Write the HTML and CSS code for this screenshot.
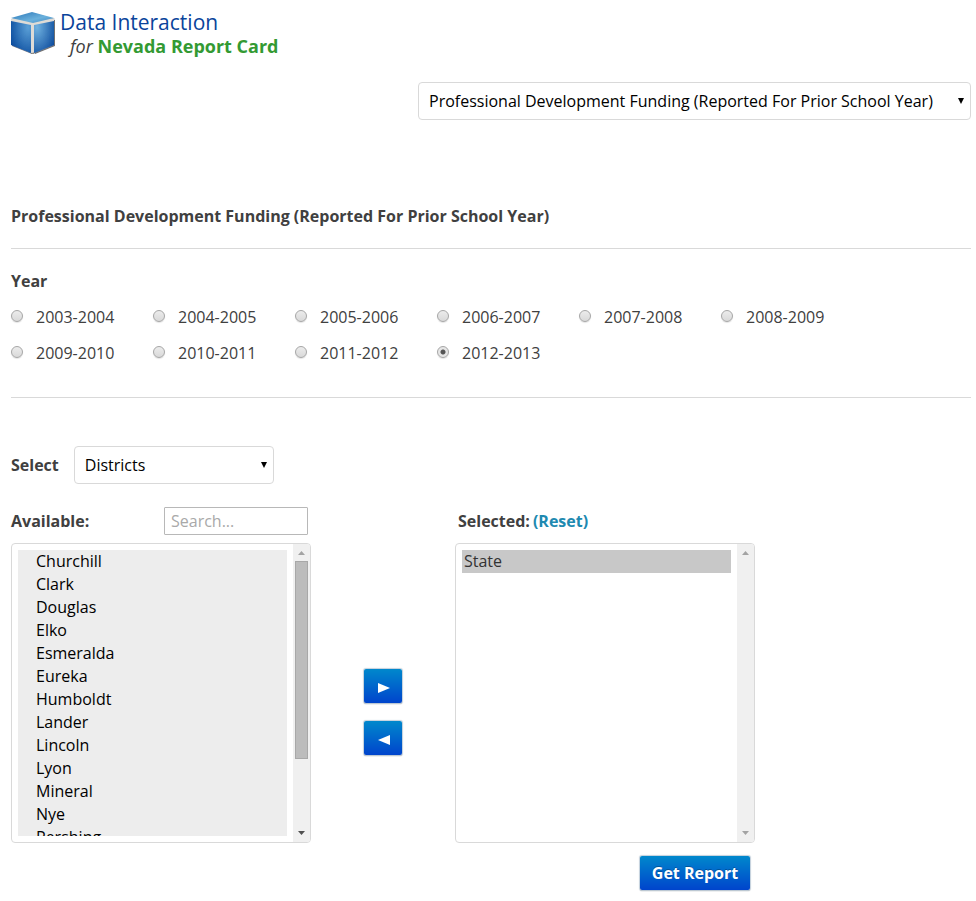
FILE: index.html
```html
<!DOCTYPE html>
<html lang="en">
<head>
<meta charset="utf-8">
<title>Data Interaction for Nevada Report Card</title>
<link rel="stylesheet" href="styles.css">
</head>
<body>
<header class="brand">
  <svg class="logo" viewBox="1 0 48 46" aria-hidden="true">
    <defs>
      <linearGradient id="top" x1="0" y1="0" x2="1" y2="1"><stop offset="0" stop-color="#2a76b8"/><stop offset=".6" stop-color="#6bb1dc"/><stop offset="1" stop-color="#3d86c2"/></linearGradient>
      <radialGradient id="left" cx=".85" cy=".2" r=".95"><stop offset="0" stop-color="#5a9fd6"/><stop offset="1" stop-color="#0e4fa0"/></radialGradient>
      <radialGradient id="right" cx=".15" cy=".2" r="1"><stop offset="0" stop-color="#70b2e0"/><stop offset="1" stop-color="#0e4d9e"/></radialGradient>
      <filter id="shade" x="-10%" y="-10%" width="125%" height="125%"><feDropShadow dx="1" dy="1" stdDeviation=".6" flood-color="#222" flood-opacity=".65"/></filter>
    </defs>
    <g filter="url(#shade)">
      <path d="M1 8 22 2 44 8V33L22 42 1 33Z" fill="#dedbd6"/>
      <path d="M1 7 22 1 44 7 23 12Z" fill="url(#top)"/>
      <path d="M1 10 21 14V42L1 34Z" fill="url(#left)"/>
      <path d="M24 14 44 10V34L24 42Z" fill="url(#right)"/>
    </g>
  </svg>
  <div class="brand-text">
    <div class="brand-name">Data Interaction</div>
    <div class="brand-sub"><em>for</em> <strong>Nevada Report Card</strong></div>
  </div>
</header>

<main>
  <div class="topic">
    <span class="dropdown dropdown-topic">
      <select aria-label="Topic"><option>Professional Development Funding (Reported For Prior School Year)</option></select>
      <svg class="caret" viewBox="0 0 6 6" aria-hidden="true"><path d="M0 0H6L3 6Z"/></svg>
    </span>
  </div>

  <h1>Professional Development Funding (Reported For Prior School Year)</h1>

  <fieldset class="years">
    <legend>Year</legend>
    <div class="year-grid">
      <label><input type="radio" name="year">2003-2004</label>
      <label><input type="radio" name="year">2004-2005</label>
      <label><input type="radio" name="year">2005-2006</label>
      <label><input type="radio" name="year">2006-2007</label>
      <label><input type="radio" name="year">2007-2008</label>
      <label><input type="radio" name="year">2008-2009</label>
      <label><input type="radio" name="year">2009-2010</label>
      <label><input type="radio" name="year">2010-2011</label>
      <label><input type="radio" name="year">2011-2012</label>
      <label><input type="radio" name="year" checked>2012-2013</label>
    </div>
  </fieldset>

  <div class="scope">
    <label for="scope">Select</label>
    <span class="dropdown dropdown-scope">
      <select id="scope"><option>Districts</option></select>
      <svg class="caret" viewBox="0 0 6 6" aria-hidden="true"><path d="M0 0H6L3 6Z"/></svg>
    </span>
  </div>

  <div class="picker">
    <section class="column">
      <div class="column-head">
        <label for="available">Available:</label>
        <input class="search" type="text" placeholder="Search..." aria-label="Search">
      </div>
      <div class="listbox listbox-available">
        <select id="available" multiple size="12">
          <option>Churchill</option><option>Clark</option><option>Douglas</option><option>Elko</option>
          <option>Esmeralda</option><option>Eureka</option><option>Humboldt</option><option>Lander</option>
          <option>Lincoln</option><option>Lyon</option><option>Mineral</option><option>Nye</option>
          <option>Pershing</option><option>Storey</option><option>Washoe</option><option>White Pine</option>
        </select>
        <div class="track">
          <svg viewBox="0 0 7 4" aria-hidden="true"><path d="M0 4 3.5 0 7 4Z"/></svg>
          <div class="thumb"></div>
          <svg class="active" viewBox="0 0 7 4" aria-hidden="true"><path d="M0 0H7L3.5 4Z"/></svg>
        </div>
      </div>
    </section>

    <div class="moves">
      <button class="button move" type="button" aria-label="Add"><svg viewBox="0 0 12 10" aria-hidden="true"><path d="M0 0 12 5 0 10Z"/></svg></button>
      <button class="button move" type="button" aria-label="Remove"><svg viewBox="0 0 12 10" aria-hidden="true"><path d="M12 0 0 5 12 10Z"/></svg></button>
    </div>

    <section class="column">
      <div class="column-head column-head-selected">
        <label for="selected">Selected:</label>
        <a href="#">(Reset)</a>
      </div>
      <div class="listbox listbox-selected">
        <select id="selected" multiple size="12"><option selected>State</option></select>
        <div class="track">
          <svg viewBox="0 0 7 4" aria-hidden="true"><path d="M0 4 3.5 0 7 4Z"/></svg>
          <svg viewBox="0 0 7 4" aria-hidden="true"><path d="M0 0H7L3.5 4Z"/></svg>
        </div>
      </div>
      <div class="actions"><button class="button report" type="button">Get Report</button></div>
    </section>
  </div>
</main>
</body>
</html>
```

FILE: styles.css
```css
* { box-sizing: border-box; }

body {
  margin: 0;
  padding: 11px 5px 10px 11px;
  background: #fff;
  color: #404040;
  font: 400 16px/23px "Open Sans", sans-serif;
}

select, input, button { font: inherit; margin: 0; }

.brand { display: flex; height: 48px; }
.logo { width: 48px; height: 46px; }
.brand-text { padding-left: 1px; }
.brand-name { color: #0a449b; font-size: 21px; line-height: 23px; }
.brand-sub { padding-left: 10px; font-size: 18px; line-height: 25px; }
.brand-sub strong { color: #339a33; font-weight: 700; }

.dropdown { position: relative; display: inline-block; }
.dropdown select {
  appearance: none;
  display: block;
  width: 100%;
  height: 38px;
  padding: 0 10px;
  border: 1px solid #d9d9d9;
  border-radius: 4px;
  background: #fff;
  color: #000;
}
.caret { position: absolute; right: 7px; top: 16px; width: 6px; height: 6px; fill: #000; pointer-events: none; }
.dropdown-topic { width: 553px; }
.dropdown-scope { width: 200px; }

.topic { display: flex; justify-content: flex-end; margin-top: 23px; }

h1 {
  margin: 85px 0 0;
  padding-bottom: 20px;
  border-bottom: 1px solid #d9d9d9;
  font-size: 16px;
  font-weight: 700;
  line-height: 23px;
}

.years {
  margin: 0;
  padding: 0 0 26px;
  border: 0;
  border-bottom: 1px solid #d9d9d9;
  min-width: 0;
}
.years legend { padding: 21px 0 6px; font-weight: 700; }
.year-grid { display: grid; grid-template-columns: repeat(auto-fill, 142px); grid-auto-rows: 36px; }
.year-grid label { display: flex; align-items: center; gap: 13px; }
.year-grid input {
  appearance: none;
  width: 12px;
  height: 12px;
  margin-bottom: 2px;
  border: 1px solid #a6a6a6;
  border-radius: 50%;
  background: linear-gradient(#ececec, #d9d9d9);
  box-shadow: 0 1px 1px #e4e4e4;
}
.year-grid input:checked { background: radial-gradient(circle, #555 0 2px, #e6e6e6 3px); }

.scope { display: flex; align-items: center; gap: 15px; margin-top: 48px; }
.scope label, .column-head { font-weight: 700; }

.picker { display: flex; margin-top: 23px; }
.column { width: 300px; }
.column-head { display: flex; align-items: center; justify-content: space-between; height: 28px; margin-bottom: 8px; padding-right: 3px; }
.column-head-selected { justify-content: flex-start; gap: 3px; padding-left: 3px; }
.column-head a { color: #2089b0; text-decoration: none; }
.search { width: 144px; height: 28px; padding: 0 6px; border: 1px solid #b8b8b8; border-radius: 1px; font-weight: 400; }
.search::placeholder { color: #a9a9a9; opacity: 1; }

.listbox { display: flex; height: 300px; overflow: hidden; border: 1px solid #d9d9d9; border-radius: 4px; }
.listbox select {
  flex: 1;
  min-width: 0;
  height: 286px;
  margin: 6px;
  padding: 0;
  border: 0;
  border-radius: 0;
  outline: 0;
  background: #fff;
  color: #000;
  overflow: hidden;
  scrollbar-width: none;
}
.listbox select::-webkit-scrollbar { display: none; }
.listbox option { min-height: 23px; padding: 0 2px; line-height: 23px; }
.listbox-available select { background: #ededed; }
.listbox-available option { padding-left: 18px; }
.listbox-selected option:checked { background: #c8c8c8 linear-gradient(#c8c8c8, #c8c8c8); color: #333; }

.track { display: flex; flex-direction: column; align-items: center; width: 17px; padding: 7px 0; background: #f0f0f0; }
.track svg { width: 7px; height: 4px; fill: #a3a3a3; }
.track svg:last-child { margin-top: auto; }
.track svg.active { fill: #505050; }
.thumb { width: 13px; height: 198px; margin-top: 6px; border: 1px solid #a8a8a8; background: #bcbcbc; }

.moves { display: flex; flex-direction: column; align-items: center; gap: 18px; width: 144px; padding-top: 162px; }
.button {
  border: 0;
  border-radius: 2px;
  background: linear-gradient(#0088cc, #0044cc);
  box-shadow: 0 0 1px 1px #c3d0dc, 0 1px 1px #777;
  color: #fff;
}
.move { display: flex; align-items: center; justify-content: center; width: 38px; height: 34px; padding: 3px 0 0 1px; }
.move svg { width: 12px; height: 10px; fill: #fff; }
.actions { display: flex; justify-content: flex-end; margin-top: 13px; padding-right: 5px; }
.report { width: 110px; height: 34px; padding: 0; font-weight: 700; text-shadow: 0 -1px 0 rgba(0, 0, 0, .25); }
```
